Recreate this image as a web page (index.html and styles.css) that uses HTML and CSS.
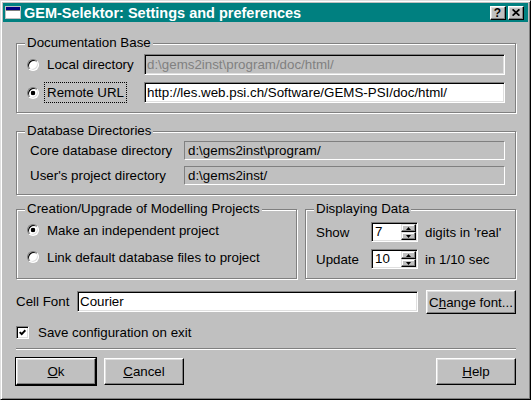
FILE: index.html
```html
<!DOCTYPE html>
<html lang="en">
<head>
<meta charset="utf-8">
<title>GEM-Selektor: Settings and preferences</title>
<link rel="stylesheet" href="styles.css">
</head>
<body>
<div class="window">
  <div class="titlebar">
    <svg class="app-icon" width="16" height="14" viewBox="0 0 16 14">
      <rect x="0.5" y="0.5" width="15" height="12" fill="#fff" stroke="#c0c0c0"/>
      <rect x="1" y="1" width="14" height="3" fill="#000080"/>
      <rect x="1" y="4" width="14" height="1" fill="#808080"/>
    </svg>
    <span class="title">GEM-Selektor: Settings and preferences</span>
    <div class="title-btns">
      <span class="tbtn tbtn-q">?</span>
      <span class="tbtn">
        <svg width="8" height="7" viewBox="0 0 8 7"><path d="M0.6 0.3 L7.4 6.7 M7.4 0.3 L0.6 6.7" stroke="#000" stroke-width="1.7" fill="none"/></svg>
      </span>
    </div>
  </div>

  <div class="content">
    <div class="group g-doc">
      <div class="group-title">Documentation Base</div>
      <div class="row row-a">
        <div class="opt"><span class="radio"></span><span class="lbl">Local directory</span></div>
        <div class="field disabled">d:\gems2inst\program/doc/html/</div>
      </div>
      <div class="row row-b">
        <div class="opt"><span class="radio on"></span><span class="lbl focus">Remote URL</span></div>
        <div class="field">http://les.web.psi.ch/Software/GEMS-PSI/doc/html/</div>
      </div>
    </div>

    <div class="group g-db">
      <div class="group-title">Database Directories</div>
      <div class="row db-row db-row-a">
        <span class="db-label">Core database directory</span>
        <div class="field flat">d:\gems2inst\program/</div>
      </div>
      <div class="row db-row db-row-b">
        <span class="db-label">User's project directory</span>
        <div class="field flat">d:\gems2inst/</div>
      </div>
    </div>

    <div class="pair">
      <div class="group g-proj">
        <div class="group-title">Creation/Upgrade of Modelling Projects</div>
        <div class="row proj-row proj-row-a">
          <span class="radio on"></span><span class="lbl">Make an independent project</span>
        </div>
        <div class="row proj-row proj-row-b">
          <span class="radio"></span><span class="lbl">Link default database files to project</span>
        </div>
      </div>
      <div class="group g-disp">
        <div class="group-title">Displaying Data</div>
        <div class="row disp-row disp-row-a">
          <span class="disp-label">Show</span>
          <div class="spin">
            <span class="spin-val">7</span>
            <div class="spin-btns">
              <span class="sbtn"><svg width="5" height="3" viewBox="0 0 5 3"><path d="M2.5 0 L5 3 L0 3 Z" fill="#000"/></svg></span>
              <span class="sbtn"><svg width="5" height="3" viewBox="0 0 5 3"><path d="M0 0 L5 0 L2.5 3 Z" fill="#000"/></svg></span>
            </div>
          </div>
          <span class="unit">digits in 'real'</span>
        </div>
        <div class="row disp-row disp-row-b">
          <span class="disp-label">Update</span>
          <div class="spin">
            <span class="spin-val">10</span>
            <div class="spin-btns">
              <span class="sbtn"><svg width="5" height="3" viewBox="0 0 5 3"><path d="M2.5 0 L5 3 L0 3 Z" fill="#000"/></svg></span>
              <span class="sbtn"><svg width="5" height="3" viewBox="0 0 5 3"><path d="M0 0 L5 0 L2.5 3 Z" fill="#000"/></svg></span>
            </div>
          </div>
          <span class="unit">in 1/10 sec</span>
        </div>
      </div>
    </div>

    <div class="cellfont">
      <span class="cf-label">Cell Font</span>
      <div class="field cf-field">Courier</div>
      <span class="btn cf-btn">C<u>h</u>ange font...</span>
    </div>

    <div class="checkrow">
      <span class="check">
        <svg width="7" height="7" viewBox="0 0 7 7"><path d="M0.7 3.1 L2.7 5.1 L6.4 1.3" stroke="#000" stroke-width="2" fill="none"/></svg>
      </span>
      <span>Save configuration on exit</span>
    </div>

    <div class="sep"></div>

    <div class="buttons">
      <span class="btn default"><u>O</u>k</span>
      <span class="btn"><u>C</u>ancel</span>
      <span class="btn help"><u>H</u>elp</span>
    </div>
  </div>
</div>
</body>
</html>
```

FILE: styles.css
```css
html, body {
  margin: 0;
  padding: 0;
}

body {
  background: #c0c0c0;
  font-family: "Liberation Sans", Arial, sans-serif;
  font-size: 13.33px;
  color: #000;
}

.window {
  box-sizing: border-box;
  width: 531px;
  height: 400px;
  background: #c0c0c0;
  border: 1px solid;
  border-color: #dfdfdf #000 #000 #dfdfdf;
  box-shadow: inset 1px 1px 0 #fff, inset -1px -1px 0 #808080;
  padding: 2px;
}

/* Title bar */
.titlebar {
  display: flex;
  align-items: center;
  height: 19px;
  background: #008080;
  color: #fff;
  padding: 0 4px 0 2px;
}

.app-icon {
  flex: none;
  margin-right: 3px;
}

.title {
  flex: 1;
  font-weight: bold;
  font-size: 14.5px;
  white-space: nowrap;
}

.title-btns {
  display: flex;
  gap: 2px;
}

.tbtn {
  box-sizing: border-box;
  width: 16px;
  height: 14px;
  display: flex;
  align-items: center;
  justify-content: center;
  background: #c0c0c0;
  color: #000;
  border: 1px solid;
  border-color: #fff #000 #000 #fff;
  box-shadow: inset -1px -1px 0 #808080, inset 1px 1px 0 #dfdfdf;
}

.tbtn-q {
  font-weight: bold;
  font-size: 12px;
  line-height: 12px;
  padding-right: 1px;
}

/* Content */
.content {
  padding: 21px 12px 0 13px;
}

.group {
  --pl: 10px;
  border: 1px solid #808080;
  box-shadow: inset 1px 1px 0 #fff, 1px 1px 0 #fff;
  padding-left: var(--pl);
  padding-right: 10px;
}

.group-title {
  width: max-content;
  margin: -9px 0 0 calc(8px - var(--pl));
  padding: 0 2px;
  line-height: 16px;
  background: #c0c0c0;
  white-space: nowrap;
}

.row {
  display: flex;
  align-items: center;
  white-space: nowrap;
}

/* Documentation base */
.g-doc {
  padding-bottom: 9px;
}

.g-doc .row {
  height: 21px;
}

.row-a {
  margin-top: 3px;
}

.row-b {
  margin-top: 7px;
}

.opt {
  display: flex;
  align-items: center;
  flex: none;
  width: 117px;
}

.radio {
  flex: none;
  box-sizing: border-box;
  width: 12px;
  height: 12px;
  border-radius: 50%;
  border: 1px solid;
  border-color: #808080 #fff #fff #808080;
  box-shadow: inset 1px 1px 0 #000, inset -1px -1px 0 #dfdfdf;
  background: #fff;
  margin-right: 5px;
}

.radio.on {
  background: radial-gradient(circle, #000 0 2px, #fff 2.6px);
}

.lbl {
  border: 1px dotted transparent;
  padding: 0 2px;
  line-height: 19px;
}

.lbl.focus {
  border-color: #000;
}

.field {
  flex: 1;
  min-width: 0;
  box-sizing: border-box;
  height: 21px;
  line-height: 19px;
  padding: 0 2px;
  background: #fff;
  border: 1px solid;
  border-color: #808080 #fff #fff #808080;
  box-shadow: inset 1px 1px 0 #000, inset -1px -1px 0 #dfdfdf;
  white-space: nowrap;
  overflow: hidden;
}

.field.disabled {
  background: #c0c0c0;
  color: #808080;
}

/* Database directories */
.g-db {
  --pl: 13px;
  margin-top: 18px;
  padding-bottom: 9px;
}

.db-row {
  height: 19px;
}

.db-row-a {
  margin-top: 2px;
}

.db-row-b {
  margin-top: 6px;
}

.db-label {
  flex: none;
  width: 154px;
}

.field.flat {
  height: 19px;
  line-height: 17px;
  background: #c0c0c0;
  box-shadow: none;
  padding: 0 3px;
}

/* Pair of groups */
.pair {
  display: flex;
  gap: 8px;
  margin-top: 14px;
}

.g-proj {
  flex: none;
  width: 281px;
  box-sizing: border-box;
  padding-bottom: 11px;
}

.proj-row {
  height: 20px;
}

.proj-row-a {
  margin-top: 3px;
}

.proj-row-b {
  margin-top: 7px;
}

.g-disp {
  flex: 1;
  padding-bottom: 9px;
}

.disp-row {
  height: 20px;
}

.disp-row-a {
  margin-top: 5px;
}

.disp-row-b {
  margin-top: 7px;
}

.disp-label {
  flex: none;
  width: 55px;
}

.spin {
  flex: none;
  box-sizing: border-box;
  width: 47px;
  height: 20px;
  display: flex;
  padding: 1px;
  background: #fff;
  border: 1px solid;
  border-color: #808080 #fff #fff #808080;
  box-shadow: inset 1px 1px 0 #000, inset -1px -1px 0 #dfdfdf;
}

.spin-val {
  flex: 1;
  padding-left: 2px;
  line-height: 16px;
}

.spin-btns {
  flex: none;
  width: 15px;
  display: flex;
  flex-direction: column;
}

.sbtn {
  flex: 1;
  box-sizing: border-box;
  display: flex;
  align-items: center;
  justify-content: center;
  background: #c0c0c0;
  border: 1px solid;
  border-color: #dfdfdf #000 #000 #dfdfdf;
  box-shadow: inset -1px -1px 0 #808080, inset 1px 1px 0 #fff;
}

.unit {
  margin-left: 7px;
}

/* Cell font */
.cellfont {
  display: flex;
  align-items: flex-start;
  height: 24px;
  margin-top: 11px;
  white-space: nowrap;
}

.cf-label {
  flex: none;
  width: 61px;
  line-height: 24px;
}

.cf-field {
  margin-top: 1px;
}

.btn {
  box-sizing: border-box;
  flex: none;
  display: flex;
  align-items: center;
  justify-content: center;
  width: 80px;
  height: 27px;
  background: #c0c0c0;
  border: 1px solid;
  border-color: #fff #000 #000 #fff;
  box-shadow: inset -1px -1px 0 #808080, inset 1px 1px 0 #dfdfdf;
  white-space: nowrap;
}

.cf-btn {
  width: 90px;
  height: 24px;
  margin-left: 8px;
}

/* Checkbox */
.checkrow {
  display: flex;
  align-items: center;
  height: 16px;
  margin-top: 10px;
}

.check {
  flex: none;
  box-sizing: border-box;
  width: 13px;
  height: 13px;
  display: flex;
  align-items: center;
  justify-content: center;
  background: #fff;
  border: 1px solid;
  border-color: #808080 #fff #fff #808080;
  box-shadow: inset 1px 1px 0 #000, inset -1px -1px 0 #dfdfdf;
  margin-right: 9px;
}

.sep {
  margin-top: 8px;
  border-top: 1px solid #808080;
  border-bottom: 1px solid #fff;
}

.buttons {
  display: flex;
  gap: 8px;
  margin-top: 8px;
}

.btn.default {
  outline: 1px solid #000;
}

.btn.help {
  margin-left: auto;
}
```
